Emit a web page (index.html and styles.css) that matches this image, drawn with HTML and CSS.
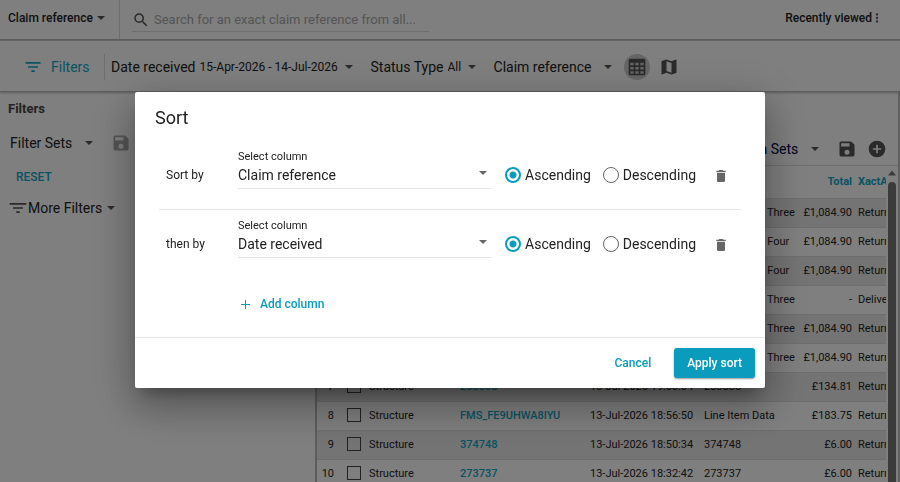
FILE: index.html
```html
<!DOCTYPE html>
<html lang="en">
<head>
    <meta charset="UTF-8">
    <meta name="viewport" content="width=device-width, initial-scale=1.0">
    <title>Claims - Sort</title>
    <link rel="stylesheet" href="styles.css">
</head>
<body>

    <!-- Search bar -->
    <header class="topbar">
        <div class="search-type">
            <select class="dropdown strong" aria-label="Search by">
                <option>Claim reference</option>
            </select>
        </div>
        <label class="search">
            <svg class="icon medium" viewBox="0 0 24 24"><path d="M15.5 14h-.79l-.28-.27A6.47 6.47 0 0 0 16 9.5 6.5 6.5 0 1 0 9.5 16c1.61 0 3.09-.59 4.23-1.57l.27.28v.79l5 4.99L20.49 19l-4.99-5zm-6 0C7.01 14 5 11.99 5 9.5S7.01 5 9.5 5 14 7.01 14 9.5 11.99 14 9.5 14z"/></svg>
            <input type="text" placeholder="Search for an exact claim reference from all..." aria-label="Search claims">
        </label>
        <button class="recent">
            Recently viewed
            <svg class="icon dots" viewBox="0 0 8 24"><path d="M4 8a2 2 0 1 0 0-4 2 2 0 0 0 0 4zm0 2a2 2 0 1 0 0 4 2 2 0 0 0 0-4zm0 6a2 2 0 1 0 0 4 2 2 0 0 0 0-4z"/></svg>
        </button>
    </header>

    <!-- Quick filters -->
    <nav class="filterbar">
        <button class="filters-toggle">
            <svg class="icon large" viewBox="0 0 24 24"><path d="M10 18h4v-2h-4v2zM3 6v2h18V6H3zm3 7h12v-2H6v2z"/></svg>
            Filters
        </button>
        <div class="quick-filters">
            <div class="quick-filter">
                <label for="dateReceived">Date received</label>
                <select class="dropdown" id="dateReceived">
                    <option>15-Apr-2026 - 14-Jul-2026</option>
                </select>
            </div>
            <div class="quick-filter">
                <label for="statusType">Status Type</label>
                <select class="dropdown" id="statusType">
                    <option>All</option>
                </select>
            </div>
            <select class="dropdown wide" aria-label="Group by">
                <option>Claim reference</option>
            </select>
        </div>
        <div class="views">
            <button class="view active" aria-label="Table view">
                <svg class="icon large" viewBox="0 0 24 24"><path fill-rule="evenodd" d="M4 2h16a2 2 0 0 1 2 2v16a2 2 0 0 1-2 2H4a2 2 0 0 1-2-2V4a2 2 0 0 1 2-2zm0 5v3h4V7zm6 0v3h4V7zm6 0v3h4V7zM4 12v3h4v-3zm6 0v3h4v-3zm6 0v3h4v-3zM4 17v3h4v-3zm6 0v3h4v-3zm6 0v3h4v-3z"/></svg>
            </button>
            <button class="view" aria-label="Map view">
                <svg class="icon large" viewBox="0 0 24 24"><path d="M20.5 3l-.16.03L15 5.1 9 3 3.36 4.9c-.21.07-.36.25-.36.48V20.500c0 .28.22.5.5.5l.16-.03L9 18.9l6 2.1 5.640-1.9c.21-.07.36-.25.36-.48V3.500c0-.28-.22-.5-.5-.5zM15 19l-6-2.110V5l6 2.110V19z"/></svg>
            </button>
        </div>
    </nav>

    <div class="content">
        <aside class="sidebar">
            <h2>Filters</h2>
            <div class="filter-sets">
                <select class="dropdown wide" aria-label="Filter sets">
                    <option>Filter Sets</option>
                </select>
                <button class="save" aria-label="Save filter set" disabled>
                    <svg class="icon large" viewBox="0 0 24 24"><path d="M17 3H5a2 2 0 0 0-2 2v14a2 2 0 0 0 2 2h14a2 2 0 0 0 2-2V7l-4-4zm-5 16a3 3 0 1 1 0-6 3 3 0 0 1 0 6zm3-10H5V5h10v4z"/></svg>
                </button>
            </div>
            <button class="reset">RESET</button>
            <div class="more-filters">
                <svg class="icon large" viewBox="0 0 24 24"><path d="M10 18h4v-2h-4v2zM2 6v2h20V6H2zm4 7h12v-2H6v2z"/></svg>
                <select class="dropdown medium" aria-label="More filters">
                    <option>More Filters</option>
                </select>
            </div>
        </aside>

        <main class="results">
            <div class="results-tools">
                <select class="dropdown wide navy" aria-label="Column sets">
                    <option>Column Sets</option>
                </select>
                <button aria-label="Save column set">
                    <svg class="icon large" viewBox="0 0 24 24"><path d="M17 3H5a2 2 0 0 0-2 2v14a2 2 0 0 0 2 2h14a2 2 0 0 0 2-2V7l-4-4zm-5 16a3 3 0 1 1 0-6 3 3 0 0 1 0 6zm3-10H5V5h10v4z"/></svg>
                </button>
                <button aria-label="Add column set">
                    <svg class="icon large" viewBox="0 0 24 24"><path d="M12 2a10 10 0 1 0 0 20 10 10 0 0 0 0-20zm5 11h-4v4h-2v-4H7v-2h4V7h2v4h4v2z"/></svg>
                </button>
            </div>
            <div class="table-area">
                <div class="table-clip">
                    <table>
                        <colgroup>
                            <col class="col-number">
                            <col class="col-check">
                            <col class="col-type">
                            <col>
                            <col class="col-date">
                            <col class="col-desc">
                            <col class="col-total">
                            <col class="col-status">
                        </colgroup>
                        <thead>
                            <tr><th></th><th></th><th>Type</th><th>Reference</th><th>Received</th><th>Name</th><th class="num">Total</th><th>XactAnalysis</th></tr>
                        </thead>
                        <tbody>
                            <tr><td class="num">1</td><td><input type="checkbox" aria-label="Select row 1"></td><td>Structure</td><td><a href="#">293541</a></td><td>14-Jul-2026 10:12:41</td><td>Structure A - Three</td><td class="num">£1,084.90</td><td>Returned</td></tr>
                            <tr><td class="num">2</td><td><input type="checkbox" aria-label="Select row 2"></td><td>Structure</td><td><a href="#">293540</a></td><td>14-Jul-2026 10:08:17</td><td>Structure A - Four</td><td class="num">£1,084.90</td><td>Returned</td></tr>
                            <tr><td class="num">3</td><td><input type="checkbox" aria-label="Select row 3"></td><td>Structure</td><td><a href="#">293539</a></td><td>14-Jul-2026 09:51:20</td><td>Structure A - Four</td><td class="num">£1,084.90</td><td>Returned</td></tr>
                            <tr><td class="num">4</td><td><input type="checkbox" aria-label="Select row 4"></td><td>Structure</td><td><a href="#">293538</a></td><td>14-Jul-2026 09:44:02</td><td>Structure A - Three</td><td class="num">-</td><td>Delivered</td></tr>
                            <tr><td class="num">5</td><td><input type="checkbox" aria-label="Select row 5"></td><td>Structure</td><td><a href="#">293537</a></td><td>14-Jul-2026 09:30:55</td><td>Structure A - Three</td><td class="num">£1,084.90</td><td>Returned</td></tr>
                            <tr><td class="num">6</td><td><input type="checkbox" aria-label="Select row 6"></td><td>Structure</td><td><a href="#">293536</a></td><td>14-Jul-2026 09:21:36</td><td>Structure A - Three</td><td class="num">£1,084.90</td><td>Returned</td></tr>
                            <tr><td class="num">7</td><td><input type="checkbox" aria-label="Select row 7"></td><td>Structure</td><td><a href="#">283838</a></td><td>13-Jul-2026 19:03:04</td><td>283838</td><td class="num">£134.81</td><td>Returned</td></tr>
                            <tr><td class="num">8</td><td><input type="checkbox" aria-label="Select row 8"></td><td>Structure</td><td><a href="#">FMS_FE9UHWA8IYU</a></td><td>13-Jul-2026 18:56:50</td><td>Line Item Data</td><td class="num">£183.75</td><td>Returned</td></tr>
                            <tr><td class="num">9</td><td><input type="checkbox" aria-label="Select row 9"></td><td>Structure</td><td><a href="#">374748</a></td><td>13-Jul-2026 18:50:34</td><td>374748</td><td class="num">£6.00</td><td>Returned</td></tr>
                            <tr><td class="num">10</td><td><input type="checkbox" aria-label="Select row 10"></td><td>Structure</td><td><a href="#">273737</a></td><td>13-Jul-2026 18:32:42</td><td>273737</td><td class="num">£6.00</td><td>Returned</td></tr>
                        </tbody>
                    </table>
                </div>
                <div class="scrollbar">
                    <svg viewBox="0 0 10 6"><path d="M5 0l5 6H0z"/></svg>
                    <div class="thumb"></div>
                </div>
            </div>
        </main>
    </div>

    <!-- Sort dialog -->
    <div class="overlay">
        <form class="dialog" role="dialog" aria-labelledby="sortTitle">
            <div class="dialog-body">
                <h1 id="sortTitle">Sort</h1>

                <div class="sort-row">
                    <span class="sort-label">Sort by</span>
                    <div class="field">
                        <label for="column1">Select column</label>
                        <select id="column1">
                            <option>Claim reference</option>
                            <option>Date received</option>
                        </select>
                    </div>
                    <div class="order">
                        <label><input type="radio" name="order1" checked>Ascending</label>
                        <label><input type="radio" name="order1">Descending</label>
                    </div>
                    <button type="button" class="delete" aria-label="Remove column">
                        <svg viewBox="0 0 14 18"><path d="M1 16c0 1.100.9 2 2 2h8a2 2 0 0 0 2-2V4H1v12zM14 1h-3.500l-1-1h-5l-1 1H0v2h14V1z"/></svg>
                    </button>
                </div>

                <div class="sort-row">
                    <span class="sort-label">then by</span>
                    <div class="field">
                        <label for="column2">Select column</label>
                        <select id="column2">
                            <option>Date received</option>
                            <option>Claim reference</option>
                        </select>
                    </div>
                    <div class="order">
                        <label><input type="radio" name="order2" checked>Ascending</label>
                        <label><input type="radio" name="order2">Descending</label>
                    </div>
                    <button type="button" class="delete" aria-label="Remove column">
                        <svg viewBox="0 0 14 18"><path d="M1 16c0 1.100.9 2 2 2h8a2 2 0 0 0 2-2V4H1v12zM14 1h-3.500l-1-1h-5l-1 1H0v2h14V1z"/></svg>
                    </button>
                </div>

                <button type="button" class="add-column">
                    <svg viewBox="0 0 18 18"><path d="M8 0h2v8h8v2h-8v8H8v-8H0V8h8z"/></svg>
                    Add column
                </button>
            </div>
            <div class="dialog-footer">
                <button type="button" class="cancel">Cancel</button>
                <button type="submit" class="apply">Apply sort</button>
            </div>
        </form>
    </div>

</body>
</html>
```

FILE: styles.css
```css
/* General */
* {
    box-sizing: border-box;
}

body {
    font-family: Roboto, 'Liberation Sans', sans-serif;
    font-size: 12px;
    background-color: #fff;
    margin: 0;
    height: 100vh;
    display: flex;
    flex-direction: column;
    overflow: hidden;
    color: #222;
}

h1, h2 {
    margin: 0;
}

button, select, input {
    font: inherit;
    color: inherit;
    background: none;
    border: none;
    margin: 0;
    padding: 0;
}

button {
    display: flex;
    align-items: center;
    cursor: pointer;
}

.icon {
    width: 16px;
    height: 16px;
    fill: #555;
    flex: none;
}

.icon.medium {
    width: 18px;
    height: 18px;
}

.icon.large {
    width: 20px;
    height: 20px;
}

.dropdown {
    appearance: none;
    padding-right: 14px;
    background: url("data:image/svg+xml,%3Csvg xmlns='http://www.w3.org/2000/svg' width='8' height='4'%3E%3Cpath d='M0 0h8L4 4z' fill='%23555'/%3E%3C/svg%3E") no-repeat right center;
}

.dropdown.strong {
    font-weight: 500;
    padding-right: 12px;
}

.dropdown.medium {
    font-size: 14px;
    padding-right: 12px;
}

.dropdown.wide {
    font-size: 14px;
    padding-right: 20px;
}

.dropdown.navy {
    color: #000040;
}

/* Search bar */
.topbar {
    display: flex;
    flex: none;
    height: 40px;
    border-bottom: 1px solid #bbb;
}

.search-type {
    display: flex;
    align-items: center;
    width: 120px;
    padding: 0 8px 4px;
    border-right: 1px solid #ddd;
}

.search {
    display: flex;
    align-items: center;
    gap: 4px;
    width: 33%;
    height: 24px;
    margin: 8px 12px;
    font-size: 13px;
    border-bottom: 1px solid #ddd;
}

.search input {
    flex: 1;
    min-width: 0;
    outline: none;
}

.search input::placeholder {
    color: #aaa;
}

.recent {
    margin-left: auto;
    padding: 0 18px 4px;
    font-weight: 500;
}

.icon.dots {
    width: 10px;
    height: 14px;
}

/* Quick filters */
.filterbar {
    display: flex;
    flex: none;
    align-items: center;
    height: 52px;
    padding-top: 2px;
    border-top: 1px solid #ccc;
    border-bottom: 1px solid #bbb;
    box-shadow: 0 1px 2px #bbb;
}

.filters-toggle {
    width: 105px;
    height: 26px;
    padding-left: 23px;
    gap: 8px;
    font-size: 14px;
    color: #12a6c6;
    border-right: 1px solid #ddd;
}

.filters-toggle .icon {
    fill: #12a6c6;
}

.quick-filters {
    display: flex;
    align-items: center;
    gap: 18px;
    padding-left: 6px;
}

.quick-filter {
    display: flex;
    align-items: center;
    gap: 4px;
}

.quick-filter label {
    font-size: 14px;
}

.views {
    display: flex;
    gap: 6px;
    margin-left: 12px;
}

.view {
    width: 26px;
    height: 26px;
    border-radius: 50%;
    justify-content: center;
}

.view.active {
    background-color: #ccc;
}

/* Page content */
.content {
    display: flex;
    flex: 1;
    min-height: 0;
}

.sidebar {
    flex: none;
    width: 317px;
    padding: 8px;
    border-right: 2px solid #bbb;
}

.sidebar h2 {
    font-size: 13px;
    line-height: 18px;
    font-weight: 700;
    color: #444;
}

.filter-sets {
    display: flex;
    align-items: center;
    gap: 18px;
    padding: 15px 2px;
}

.save {
    opacity: 0.5;
}

.reset {
    padding: 0 8px;
    line-height: 18px;
    font-weight: 500;
    color: #12a6c6;
}

.more-filters {
    display: flex;
    align-items: center;
    padding-top: 12px;
}

.results {
    flex: 1;
    min-width: 0;
    display: flex;
    flex-direction: column;
    border-right: 2px solid #bbb;
}

.results-tools {
    display: flex;
    flex: none;
    justify-content: flex-end;
    align-items: flex-end;
    gap: 10px;
    height: 74px;
    padding: 0 11px 6px;
    border-bottom: 1px solid #ddd;
}

.results-tools .dropdown {
    margin: 0 8px 2px;
}

.table-area {
    flex: 1;
    min-height: 0;
    display: flex;
    overflow: hidden;
}

.table-clip {
    flex: 1;
    min-width: 0;
    overflow: hidden;
}

table {
    width: calc(100% + 30px);
    table-layout: fixed;
    border-collapse: collapse;
    font-size: 11px;
}

.col-number {
    width: 20px;
}

.col-check {
    width: 29px;
}

.col-type {
    width: 91px;
}

.col-date {
    width: 114px;
}

.col-desc {
    width: 94px;
}

.col-total {
    width: 60px;
}

.col-status {
    width: 61px;
}

th, td {
    height: 29px;
    padding: 0 3px;
    text-align: left;
    white-space: nowrap;
    border-bottom: 1px solid #ddd;
}

th {
    height: 32px;
    font-weight: 700;
    color: #12a6c6;
}

.num {
    text-align: right;
}

tbody tr:nth-child(odd) {
    background-color: #e8e8e8;
}

td a {
    font-weight: 500;
    color: #12a6c6;
    text-decoration: none;
}

td input {
    appearance: none;
    display: block;
    width: 14px;
    height: 14px;
    margin: 0 2px 2px auto;
    border: 1px solid #444;
}

.scrollbar {
    flex: none;
    display: flex;
    flex-direction: column;
    gap: 6px;
    width: 12px;
    padding: 4px 2px 0;
}

.scrollbar svg {
    flex: none;
    width: 8px;
    height: 6px;
    fill: #777;
}

.thumb {
    flex: 1;
    border-radius: 4px 4px 0 0;
    background-color: #777;
}

/* Sort dialog */
.overlay {
    position: fixed;
    inset: 0;
    display: flex;
    align-items: center;
    justify-content: center;
    padding-bottom: 2px;
    background-color: rgba(0, 0, 0, 0.5);
}

.dialog {
    width: 70%;
    background-color: #fff;
    border-radius: 2px;
    box-shadow: 0 11px 15px -7px rgba(0, 0, 0, 0.3), 0 20px 38px 3px rgba(0, 0, 0, 0.2), 0 9px 46px 8px rgba(0, 0, 0, 0.14);
}

.dialog-body {
    padding: 12px 24px;
}

h1 {
    margin: 0 0 8px -4px;
    font-size: 18px;
    line-height: 28px;
    font-weight: 400;
}

.sort-row {
    display: flex;
    align-items: flex-end;
    height: 69px;
    padding: 0 7px 20px;
}

.sort-row + .sort-row {
    border-top: 1px solid #e8e8e8;
}

.sort-label {
    width: 72px;
    line-height: 28px;
}

.field {
    flex: 1;
    display: flex;
    flex-direction: column;
}

.field label {
    font-size: 11px;
    line-height: 12px;
}

.field select {
    appearance: none;
    height: 26px;
    padding-bottom: 2px;
    font-size: 14px;
    border-bottom: 1px solid #e4e4e4;
    background: url("data:image/svg+xml,%3Csvg xmlns='http://www.w3.org/2000/svg' width='8' height='4'%3E%3Cpath d='M0 0h8L4 4z' fill='%23666'/%3E%3C/svg%3E") no-repeat right 4px top 8px;
}

.order {
    display: flex;
    gap: 12px;
    height: 28px;
    margin-left: 14px;
    font-size: 14px;
}

.order label {
    display: flex;
    align-items: center;
    gap: 4px;
}

.order input {
    appearance: none;
    width: 16px;
    height: 16px;
    border: 1px solid #666;
    border-radius: 50%;
}

.order input:checked {
    border: 2px solid #0a9bbd;
    background: radial-gradient(#0a9bbd 3px, transparent 4px);
}

.delete {
    height: 26px;
    margin: 0 8px 0 20px;
}

.delete svg {
    width: 10px;
    height: 12px;
    fill: #666;
}

.add-column {
    gap: 10px;
    margin: 16px 0 11px 82px;
    line-height: 20px;
    font-weight: 500;
    color: #0a9bbd;
}

.add-column svg {
    width: 9px;
    height: 9px;
    fill: #0a9bbd;
}

.dialog-footer {
    display: flex;
    justify-content: flex-end;
    gap: 10px;
    padding: 10px;
    border-top: 1px solid #e8e8e8;
}

.cancel, .apply {
    height: 30px;
    padding: 0 13px;
    font-weight: 500;
    border-radius: 3px;
    color: #0a9bbd;
}

.apply {
    color: #fff;
    background-color: #0a9bbd;
    box-shadow: 0 1px 2px rgba(0, 0, 0, 0.4);
}
```
